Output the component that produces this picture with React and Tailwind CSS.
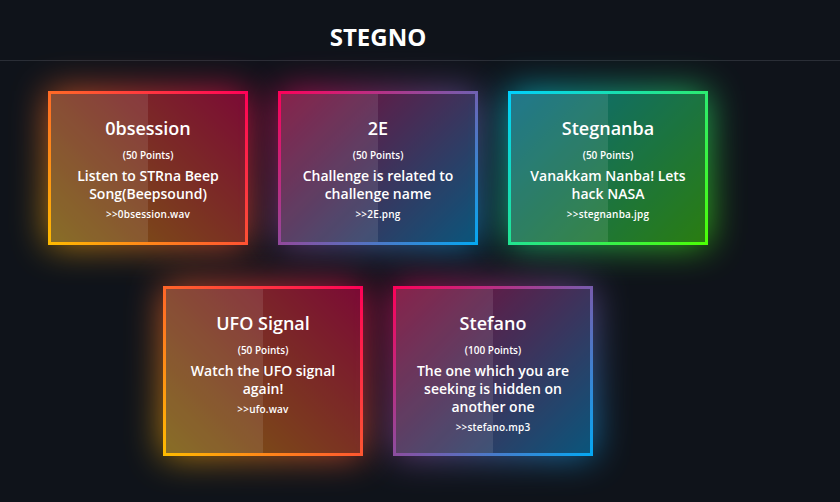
import React from "react";

const challenges = [
    {
        name: "0bsession",
        points: 50,
        desc: "Listen to STRna Beep Song(Beepsound)",
        file: ">>0bsession.wav",
        grad: "bg-[linear-gradient(45deg,#ffbc00,#ff0058)]",
    },
    {
        name: "2E",
        points: 50,
        desc: "Challenge is related to challenge name",
        file: ">>2E.png",
        grad: "bg-[linear-gradient(315deg,#03a9f4,#ff0058)]",
    },
    {
        name: "Stegnanba",
        points: 50,
        desc: "Vanakkam Nanba! Lets hack NASA",
        file: ">>stegnanba.jpg",
        grad: "bg-[linear-gradient(315deg,#4dff03,#00d0ff)]",
    },
    {
        name: "UFO Signal",
        points: 50,
        desc: "Watch the UFO signal again!",
        file: ">>ufo.wav",
        grad: "bg-[linear-gradient(45deg,#ffbc00,#ff0058)]",
    },
    {
        name: "Stefano",
        points: 100,
        desc: "The one which you are seeking is hidden on another one",
        file: ">>stefano.mp3",
        grad: "bg-[linear-gradient(315deg,#03a9f4,#ff0058)]",
    },
];

const Card = ({ c }) => {
    return (
        <div className="relative w-[200px] min-h-[154px]">
            {/* glow */}
            <div className={`absolute inset-0 blur-[18px] opacity-70 ${c.grad}`} />
            {/* gradient border */}
            <div className={`relative flex h-full p-[3px] ${c.grad}`}>
                <div className="relative flex w-full flex-col items-center bg-[#0f131a]/55 px-2 pt-[20px] pb-[18px] text-center text-white">
                    {/* glass half */}
                    <div className="absolute inset-y-0 left-0 w-1/2 bg-white/10" />
                    <h2 className="relative text-[18px] font-semibold leading-7">{c.name}</h2>
                    <p className="relative mt-[5px] text-[10px] font-semibold leading-4">({c.points} Points)</p>
                    <p className="relative mt-1 text-[14px] font-semibold leading-[18px]">{c.desc}</p>
                    <p className="relative mt-[3px] text-[10px] font-semibold leading-4 tracking-[0.2px]">{c.file}</p>
                </div>
            </div>
        </div>
    );
};

export default function App() {
    return (
        <div className="min-h-[502px] bg-[#0f131a] font-['Open_Sans',sans-serif]">
            {/* Header */}
            <div className="border-b border-[#2a2e36]">
                <div className="w-[756px] pt-[21px] pb-[7px] text-center">
                    <h1 className="text-[24px] font-bold leading-8 text-white">STEGNO</h1>
                </div>
            </div>

            {/* Challenge cards */}
            <div className="mt-[30px] flex w-[756px] flex-wrap justify-center gap-x-[30px] gap-y-[41px]">
                {challenges.map((c) => (
                    <Card key={c.name} c={c} />
                ))}
            </div>
        </div>
    );
}
